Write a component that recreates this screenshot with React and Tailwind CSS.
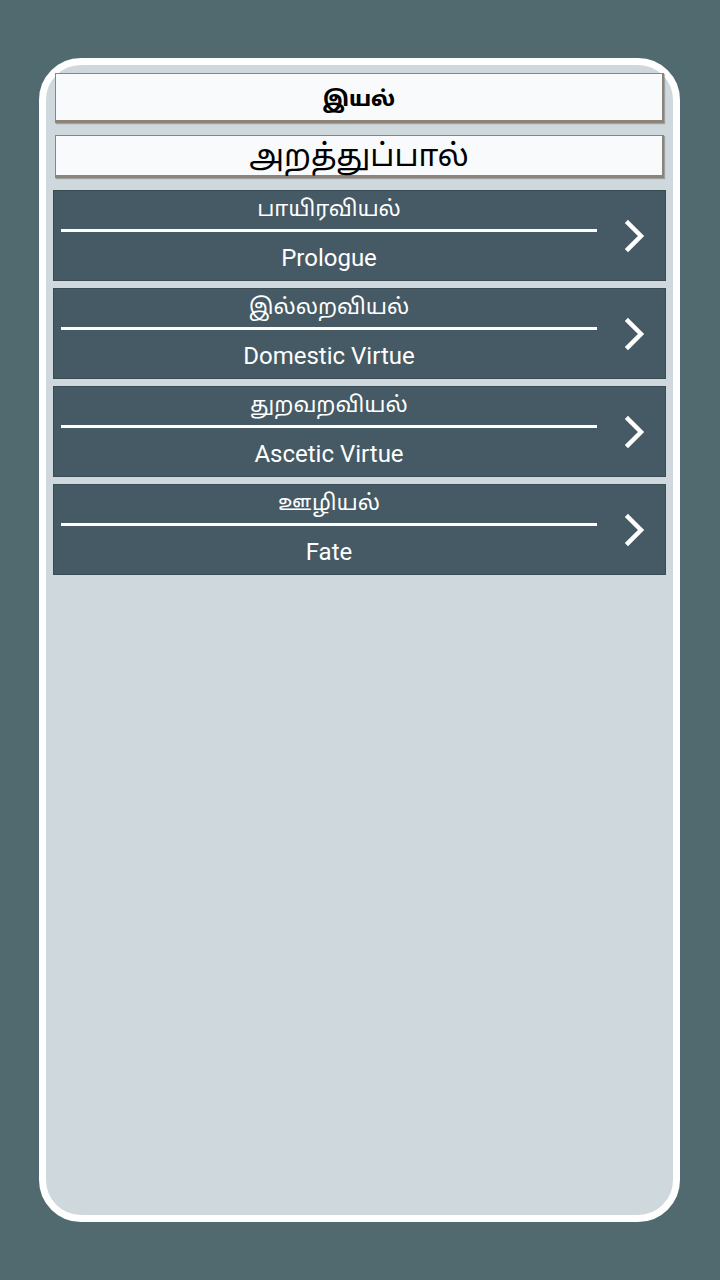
import React from "react";

const sections = [
  { ta: "பாயிரவியல்", en: "Prologue" },
  { ta: "இல்லறவியல்", en: "Domestic Virtue" },
  { ta: "துறவறவியல்", en: "Ascetic Virtue" },
  { ta: "ஊழியல்", en: "Fate" },
];

const tamilFont = {
  fontFamily:
    "'Noto Sans Tamil', 'Noto Sans Tamil UI', 'Lohit Tamil', 'Noto Sans', Roboto, sans-serif",
};

function Chevron() {
  return (
    <svg width="24" height="34" viewBox="0 0 24 34" className="block">
      <polyline
        points="5,4 18,17 5,30"
        fill="none"
        stroke="white"
        strokeWidth="4.5"
        strokeLinecap="square"
        strokeLinejoin="miter"
      />
    </svg>
  );
}

function SectionRow({ item }) {
  return (
    <div className="flex h-[91px] border border-[#3a4b53] bg-[#455a64]">
      <div className="flex flex-1 flex-col pl-[7px]">
        <div
          className="flex h-[38px] items-center justify-center pt-[1px] text-[22px] leading-none text-white"
          style={tamilFont}
        >
          {item.ta}
        </div>
        <div className="h-[3px] bg-white" />
        <div className="flex flex-1 items-center justify-center pt-[3px] text-[24px] leading-none text-white">
          {item.en}
        </div>
      </div>
      <div className="flex w-[68px] items-center justify-center pl-[8px]">
        <Chevron />
      </div>
    </div>
  );
}

export default function App() {
  return (
    <div
      className="h-[1280px] w-[720px] bg-[#516a70] pl-[39px] pt-[58px]"
      style={{ fontFamily: "Roboto, 'Noto Sans', sans-serif" }}
    >
      <div className="flex h-[1164px] w-[641px] flex-col rounded-[42px] border-[7px] border-white bg-[#cfd8dc] px-[7px] pt-[8px]">
        <div
          className="mx-[2px] flex h-[50px] items-center justify-center border border-b-[3px] border-r-[2px] border-[#8d8477] bg-[#f9fafc] pt-[9px] text-[21px] font-extrabold text-black shadow-[1px_1px_1px_rgba(0,0,0,0.25)]"
          style={tamilFont}
        >
          இயல்
        </div>
        <div
          className="mx-[2px] mt-[12px] flex h-[43px] items-center justify-center border border-b-[3px] border-r-[2px] border-[#8d8477] bg-[#f9fafc] pt-[6px] text-[31px] text-black shadow-[1px_1px_1px_rgba(0,0,0,0.25)]"
          style={tamilFont}
        >
          அறத்துப்பால்
        </div>
        <div className="mt-[12px] flex flex-col gap-[7px]">
          {sections.map((item) => (
            <SectionRow key={item.en} item={item} />
          ))}
        </div>
      </div>
    </div>
  );
}
